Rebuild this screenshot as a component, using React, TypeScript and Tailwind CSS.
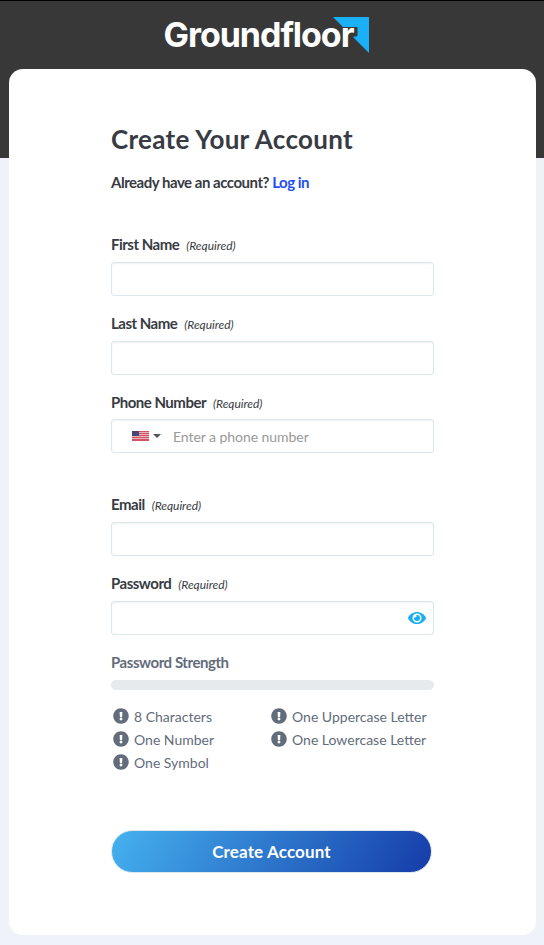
import type { ReactNode } from "react";
import { clsx } from "clsx";
import { FaEye, FaExclamationCircle } from "react-icons/fa";

const requirements = [
  ["8 Characters", "One Number", "One Symbol"],
  ["One Uppercase Letter", "One Lowercase Letter"],
];

function Logo() {
  return (
    <svg
      width="206"
      height="38"
      viewBox="0 0 206 38"
      className="overflow-visible"
      aria-label="Groundfloor"
    >
      <path d="M169 1H205V37L189 21L193.5 20V11H179Z" fill="#1ab0f8" />
      <text
        x="-0.5"
        y="31"
        fill="#fff"
        fontSize="34"
        fontWeight="700"
        fontFamily="Inter, sans-serif"
        textLength="191"
        lengthAdjust="spacing"
      >
        Groundfloor
      </text>
    </svg>
  );
}

function Flag() {
  return (
    <svg width="17" height="10" viewBox="0 0 17 10" shapeRendering="crispEdges">
      <rect width="17" height="10" fill="#e5b3ba" />
      {[0, 2, 4, 6, 8].map((y) => (
        <rect key={y} y={y} width="17" height="1" fill="#d35363" />
      ))}
      <rect y="9" width="17" height="1" fill="#d35363" />
      <rect width="7" height="5" fill="#494577" />
    </svg>
  );
}

interface FieldProps {
  label: string;
  className?: string;
  boxClassName?: string;
  children?: ReactNode;
}

function Field({ label, className, boxClassName = "mt-[7px]", children }: FieldProps) {
  return (
    <div className={className}>
      <label className="flex h-5 items-baseline text-[15px] leading-[18px] font-bold tracking-[-0.5px] text-[#383b43]">
        {label}
        <span className="ml-[7px] text-[12px] font-normal tracking-[-0.05px] italic">(Required)</span>
      </label>
      <div
        className={clsx(
          "flex h-[34px] items-center rounded-[3px] border border-[#dae7ed] bg-white shadow-[inset_0_1px_2px_rgba(0,0,0,0.06)]",
          boxClassName
        )}
      >
        {children}
      </div>
    </div>
  );
}

export default function App() {
  return (
    <div className="h-[945px] w-[544px] bg-[#eff3f9] font-['Lato',sans-serif]">
      <header className="flex h-[158px] justify-center border-t border-black bg-[#383838] pt-[15px]">
        <div className="-ml-[11px]">
          <Logo />
        </div>
      </header>

      <main className="relative mx-auto -mt-[89px] mr-2 ml-[9px] h-[866px] rounded-[14px] bg-white pt-[52px] pr-[102px] pl-[102px]">
        <h1 className="text-[26px] leading-9 font-bold tracking-[0.3px] whitespace-nowrap text-[#383b43]">
          Create Your Account
        </h1>
        <p className="mt-4 h-5 text-[15px] leading-[18px] font-bold tracking-[-0.48px] text-[#383b43]">
          Already have an account?{" "}
          <a href="#" className="text-[#1f4ff0]">
            Log in
          </a>
        </p>

        <form className="mt-[42px]">
          <Field label="First Name" />
          <Field label="Last Name" className="mt-[18px]" />
          <Field label="Phone Number" className="mt-[18px]" boxClassName="mt-1.5">
            <div className="ml-5 flex items-center gap-1">
              <Flag />
              <span className="border-x-4 border-t-4 border-x-transparent border-t-[#555]" />
            </div>
            <span className="ml-3 text-[14px] tracking-[-0.05px] text-[#999]">Enter a phone number</span>
          </Field>
          <Field label="Email" className="mt-[42px]" />
          <Field label="Password" className="mt-[18px]">
            <FaEye className="mr-[7px] ml-auto text-[18px] text-[#1ab0f0]" />
          </Field>

          <p className="mt-[18px] h-5 text-[15px] leading-[18px] font-bold tracking-[-0.45px] text-[#636c7b]">
            Password Strength
          </p>
          <div className="mt-[7px] h-2.5 rounded-full bg-[#e6eaed]" />

          <div className="mt-[15px] grid h-[69px] grid-cols-[158px_1fr] pl-0.5">
            {requirements.map((column, i) => (
              <ul key={i}>
                {column.map((text) => (
                  <li
                    key={text}
                    className="flex h-[23px] items-center gap-[5px] text-[14px] whitespace-nowrap text-[#636c7b]"
                  >
                    <FaExclamationCircle className="mb-0.5 text-[16px]" />
                    {text}
                  </li>
                ))}
              </ul>
            ))}
          </div>

          <button
            type="button"
            className="mt-[56px] h-[43px] w-[321px] rounded-full border border-[#dae7ed] bg-linear-[120deg,#45b1ef,#153ca8] text-[17px] font-bold tracking-[0.15px] text-white"
          >
            Create Account
          </button>
        </form>
      </main>
    </div>
  );
}
